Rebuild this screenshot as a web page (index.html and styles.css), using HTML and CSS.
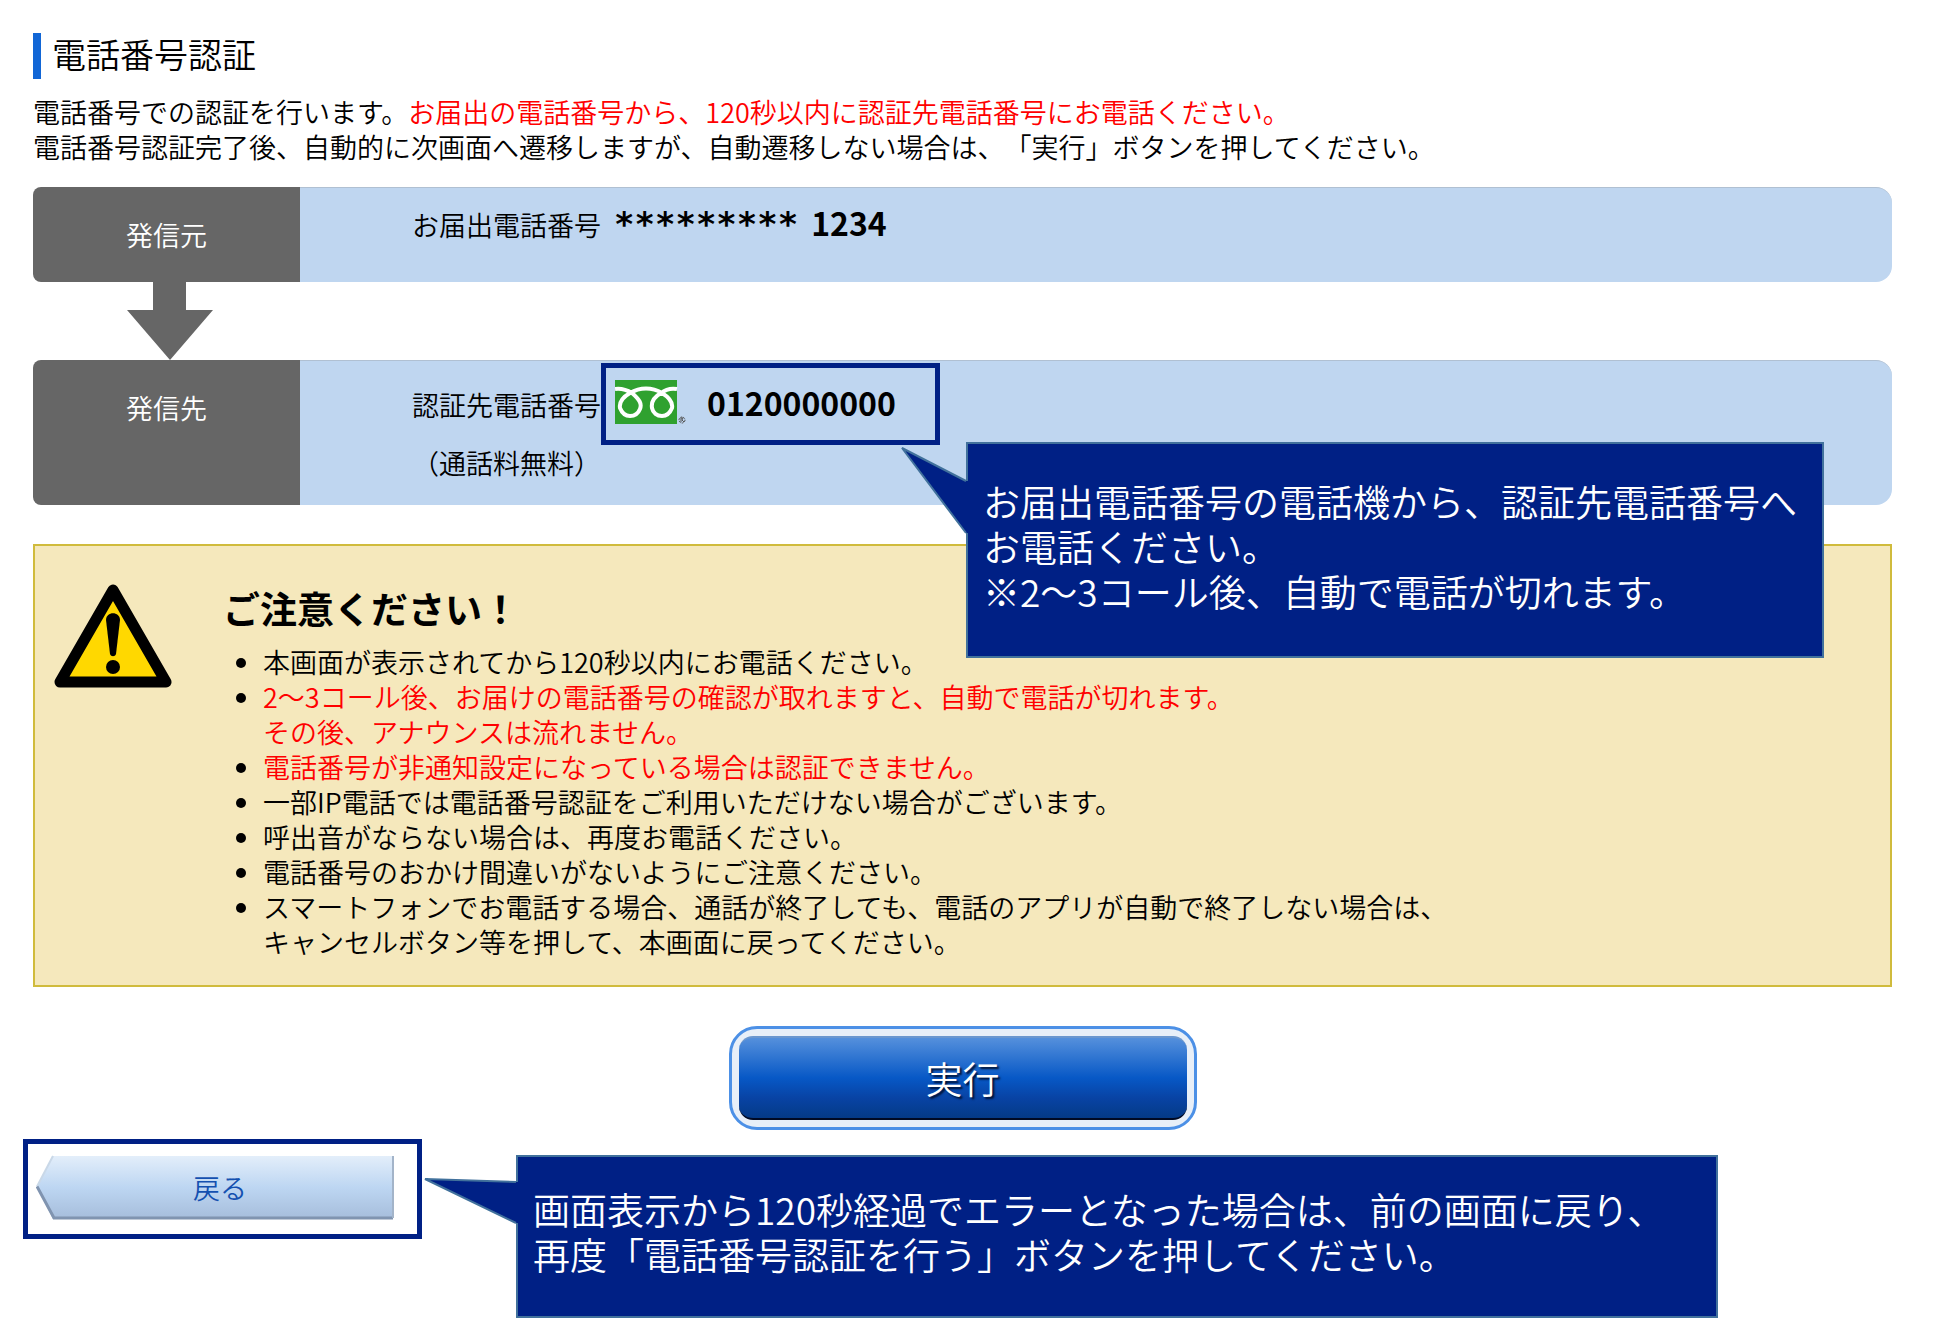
FILE: index.html
```html
<!DOCTYPE html>
<html lang="ja">
<head>
  <meta charset="UTF-8">
  <meta name="viewport" content="width=device-width, initial-scale=1.0">
  <title>電話番号認証</title>
  <link rel="stylesheet" href="styles.css">
</head>
<body>
  <main class="page">
    <h1 class="page-title">電話番号認証</h1>
    <p class="intro">
      電話番号での認証を行います。<span class="alert">お届出の電話番号から、120秒以内に認証先電話番号にお電話ください。</span><br>
      電話番号認証完了後、自動的に次画面へ遷移しますが、自動遷移しない場合は、「実行」ボタンを押してください。
    </p>

    <section class="call-row">
      <h2 class="call-label">発信元</h2>
      <div class="call-body call-from">
        <span class="call-name">お届出電話番号</span>
        <span class="mask">*********</span>
        <span class="number">1234</span>
      </div>
    </section>

    <svg class="arrow" viewBox="0 0 86 78" aria-hidden="true">
      <path d="M26 0H59V28H86L43 78L0 28H26Z" fill="#666"/>
    </svg>

    <section class="call-row">
      <h2 class="call-label">発信先</h2>
      <div class="call-body call-to">
        <div class="call-line">
          <span class="call-name">認証先電話番号</span>
          <div class="marked phone">
            <svg class="freedial" viewBox="0 0 72 44" role="img" aria-label="フリーダイヤル">
              <rect width="62" height="44" fill="#2fa12f"/>
              <g fill="none" stroke="#fff" stroke-width="4">
                <path d="M0 9C7 8 12 10 17 13C25 20 27 24 25 29C23 34 20 36 15 36C10 36 7 33 5 28C4 22 8 17 15 13C25 7 37 7 47 13C55 18 58 23 57 28C55 33 52 36 47 36C42 36 38 33 37 28C36 22 39 17 46 13C51 9 56 8 62 9"/>
              </g>
              <g fill="none" stroke="#555" stroke-width="1">
                <circle cx="67" cy="40" r="3" stroke-dasharray="2 1"/>
                <path d="M66 42V38H68L67 40L69 42"/>
              </g>
            </svg>
            <span class="number">0120000000</span>
            <div class="callout callout-phone">
              <svg class="tail" viewBox="0 0 67 88" aria-hidden="true">
                <path d="M67 34H65L1 1L65 86H67Z" fill="#002085"/>
                <path d="M65 34L1 1L65 86" fill="none" stroke="#41719c" stroke-width="2"/>
              </svg>
              <p>お届出電話番号の電話機から、認証先電話番号へ<br>お電話ください。<br>※2～3コール後、自動で電話が切れます。</p>
            </div>
          </div>
        </div>
        <span class="call-name">（通話料無料）</span>
      </div>
    </section>

    <section class="notice">
      <svg class="warning" viewBox="0 0 118 108" aria-hidden="true">
        <path d="M59 9L112 101H6Z" fill="#ffd800" stroke="#000" stroke-width="11" stroke-linejoin="round"/>
        <path d="M52 39C52 30 66 30 66 39L62 73C61 76 57 76 56 73Z"/>
        <circle cx="59" cy="86" r="7"/>
      </svg>
      <div>
        <h2 class="notice-title">ご注意ください！</h2>
        <ul class="notice-list">
          <li>本画面が表示されてから120秒以内にお電話ください。</li>
          <li><span class="alert">2～3コール後、お届けの電話番号の確認が取れますと、自動で電話が切れます。<br>その後、アナウンスは流れません。</span></li>
          <li><span class="alert">電話番号が非通知設定になっている場合は認証できません。</span></li>
          <li>一部IP電話では電話番号認証をご利用いただけない場合がございます。</li>
          <li>呼出音がならない場合は、再度お電話ください。</li>
          <li>電話番号のおかけ間違いがないようにご注意ください。</li>
          <li>スマートフォンでお電話する場合、通話が終了しても、電話のアプリが自動で終了しない場合は、<br>キャンセルボタン等を押して、本画面に戻ってください。</li>
        </ul>
      </div>
    </section>

    <button type="submit" class="submit"><span class="submit-face">実行</span></button>
  </main>

  <footer class="back-area">
    <div class="marked back">
      <button type="button" class="back-button">
        <svg class="back-shape" viewBox="0 0 358 66" preserveAspectRatio="none" aria-hidden="true">
          <defs>
            <linearGradient id="backFill" x1="0" y1="0" x2="0" y2="1">
              <stop offset="0" stop-color="#e3eefa"/>
              <stop offset="0.5" stop-color="#bdd6f2"/>
              <stop offset="1" stop-color="#a6bddb"/>
            </linearGradient>
          </defs>
          <path d="M17 1H357V65H17L1 32Z" fill="url(#backFill)"/>
          <path d="M1 32L17 1" fill="none" stroke="#c9d8e8" stroke-width="2"/>
          <path d="M1 32L18 64H357" fill="none" stroke="#8094b0" stroke-width="3"/>
          <path d="M357 1V64" fill="none" stroke="#a3b4c9" stroke-width="2"/>
        </svg>
        <span class="back-text">戻る</span>
      </button>
    </div>
    <div class="callout callout-back">
      <svg class="tail" viewBox="0 0 94 47" aria-hidden="true">
        <path d="M94 4H92L1 1L92 45H94Z" fill="#002085"/>
        <path d="M92 4L1 1L92 45" fill="none" stroke="#41719c" stroke-width="2"/>
      </svg>
      <p>画面表示から120秒経過でエラーとなった場合は、前の画面に戻り、<br>再度「電話番号認証を行う」ボタンを押してください。</p>
    </div>
  </footer>
</body>
</html>
```

FILE: styles.css
```css
* {
  box-sizing: border-box;
}

body {
  margin: 0;
  background-color: #fff;
  color: #000;
  font-family: "Noto Sans CJK JP", sans-serif;
  font-size: 27px;
  font-weight: 350;
  line-height: 35px;
  text-spacing-trim: space-all;
}

h1,
h2,
p,
ul {
  margin: 0;
  padding: 0;
}

button {
  padding: 0;
  border: none;
  background: none;
  font: inherit;
  cursor: pointer;
}

.page {
  padding: 33px 52px 0 33px;
}

.page-title {
  padding: 0 0 4px 11px;
  border-left: 8px solid #1166d6;
  font-size: 34px;
  font-weight: 350;
  line-height: 42px;
}

.intro {
  margin: 15px 0 23px;
}

.alert {
  color: #f00;
}

/* 発信元・発信先 */
.call-row {
  display: flex;
}

.call-label {
  flex: none;
  width: 267px;
  padding: 30px 0;
  border-radius: 8px 0 0 8px;
  background-color: #666;
  color: #fff;
  font-size: 27px;
  font-weight: 350;
  text-align: center;
}

.call-body {
  flex: 1;
  padding-left: 112px;
  border-top: 1px solid #b0c0d2;
  border-radius: 0 16px 16px 0;
  background-color: #bfd6f0;
}

.call-from {
  display: flex;
  align-items: baseline;
  gap: 13px;
  padding-top: 17px;
}

.call-to {
  padding-top: 2px;
  padding-bottom: 25px;
}

.call-line {
  display: flex;
  align-items: center;
}

.call-name {
  display: block;
  width: 189px;
}

.mask {
  font-family: "DejaVu Sans Mono", monospace;
  font-size: 34px;
  font-weight: 700;
}

.number {
  font-size: 32px;
  font-weight: 700;
}

.arrow {
  display: block;
  width: 86px;
  height: 78px;
  margin-left: 94px;
}

/* 強調枠 */
.marked {
  border: 5px solid #002085;
}

.phone {
  position: relative;
  display: flex;
  align-items: center;
  gap: 20px;
  height: 82px;
  padding: 0 39px 4px 9px;
}

.freedial {
  width: 72px;
  height: 44px;
}

/* 吹き出し */
.callout {
  border: 2px solid #41719c;
  background-color: #002085;
  color: #fff;
  font-size: 37px;
  font-weight: 350;
  line-height: 45px;
  white-space: nowrap;
}

.callout-phone {
  position: absolute;
  z-index: 1;
  top: 74px;
  left: 360px;
  padding: 35px 25px 42px 15px;
}

.callout-back {
  position: relative;
  margin-top: 16px;
  padding: 30px 52px 39px 15px;
}

.tail {
  position: absolute;
}

.callout-phone .tail {
  top: 3px;
  left: -67px;
  width: 67px;
  height: 88px;
}

.callout-back .tail {
  top: 21px;
  left: -94px;
  width: 94px;
  height: 47px;
}

/* ご注意 */
.notice {
  display: flex;
  align-items: flex-start;
  gap: 51px;
  margin-top: 39px;
  padding: 35px 19px 26px;
  border: 2px solid #d0bb3c;
  background-color: #f5e8bc;
}

.warning {
  flex: none;
  width: 118px;
  height: 108px;
}

.notice-title {
  margin-bottom: 9px;
  font-size: 37px;
  font-weight: 700;
  line-height: 54px;
}

.notice-list {
  padding-left: 40px;
}

/* ボタン */
.submit {
  display: block;
  width: 468px;
  margin: 39px auto 0;
  padding: 7px;
  border: 3px solid #4c90e6;
  border-radius: 28px;
  background-color: #e8eff8;
}

.submit-face {
  display: block;
  border-top: 2px solid #6b97cf;
  border-bottom: 2px solid #000a24;
  border-radius: 14px;
  background: linear-gradient(#5590dc, #0758c6 50%, #0843a4 75%, #043a86);
  color: #fff;
  font-size: 37px;
  line-height: 80px;
  text-shadow: 2px 2px 2px #001030;
}

.back-area {
  display: flex;
  align-items: flex-start;
  gap: 94px;
  padding: 9px 23px 16px;
}

.back {
  flex: none;
  padding: 11px 23px 14px 8px;
}

.back-button {
  display: grid;
  width: 358px;
  height: 65px;
}

.back-shape,
.back-text {
  grid-area: 1 / 1;
}

.back-shape {
  width: 100%;
  height: 65px;
}

.back-text {
  align-self: center;
  padding-left: 10px;
  color: #1450b0;
}
```
